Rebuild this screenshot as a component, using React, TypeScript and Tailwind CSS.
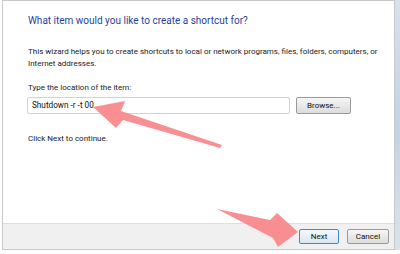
import React from "react";

export default function App() {
  const font = { fontFamily: 'Roboto, "Liberation Sans", sans-serif' };
  return (
    <div className="relative w-[400px] h-[254px] bg-white overflow-hidden text-[#1a1a1a]" style={font}>
      <div className="flex h-[250px]">
        <div className="ml-[2px] w-[393px] h-[250px] flex flex-col border border-[#c9c9c9] bg-white">
          <div className="flex-1 flex flex-col pl-[25px] pr-2">
            <div className="mt-[12px] text-[10px] leading-[16px] text-[#1f3f99]">
              What item would you like to create a shortcut for?
            </div>
            <div className="mt-[17px] text-[8px] leading-[12px] text-[#222] whitespace-nowrap">
              This wizard helps you to create shortcuts to local or network programs, files, folders, computers, or
              <br />
              Internet addresses.
            </div>
            <div className="mt-[12px] text-[8px] leading-[12px] text-[#222]">Type the location of the item:</div>
            <div className="mt-[2px] flex items-center gap-[6px]">
              <div className="w-[263px] h-[17px] border border-[#d2d2d2] rounded-[2px] flex items-center pl-[4px] text-[8.2px] text-[#111] -ml-[1px]">
                Shutdown -r -t 00
              </div>
              <div className="w-[55px] h-[17px] border border-[#9a9a9a] rounded-[2px] bg-gradient-to-b from-[#f6f6f6] to-[#dcdcdc] flex items-center justify-center text-[8px] text-[#111] mt-[1px]">
                Browse...
              </div>
            </div>
            <div className="mt-[19px] text-[8px] leading-[12px] text-[#222]">Click Next to continue.</div>
          </div>
          <div className="h-[26px] bg-[#f0f0f0] border-t border-[#dedede] flex items-center justify-end gap-[8px] pr-[5px]">
            <div className="w-[40px] h-[15px] border border-[#3d8bc4] rounded-[2px] bg-gradient-to-b from-[#f3f8fc] to-[#dbe6ef] flex items-center justify-center text-[8px] text-[#111]">
              Next
            </div>
            <div className="w-[42px] h-[15px] border border-[#9a9a9a] rounded-[2px] bg-gradient-to-b from-[#f6f6f6] to-[#dcdcdc] flex items-center justify-center text-[8px] text-[#111]">
              Cancel
            </div>
          </div>
        </div>
        <div className="w-[5px] h-[250px] bg-gradient-to-b from-[#d6e2ee] via-[#c3d3e4] to-[#d9e3ec]" />
      </div>
      <svg className="absolute inset-0 pointer-events-none" width="400" height="254" viewBox="0 0 400 254">
        <polygon
          points="93,107 125,101 121,111 222,145 220,148 123,120 116,128"
          fill="#f7868a"
          fillOpacity="0.92"
        />
        <polygon
          points="217,209 270,220 277,213 298,232 278,247 273,238"
          fill="#f7868a"
          fillOpacity="0.92"
        />
      </svg>
    </div>
  );
}
